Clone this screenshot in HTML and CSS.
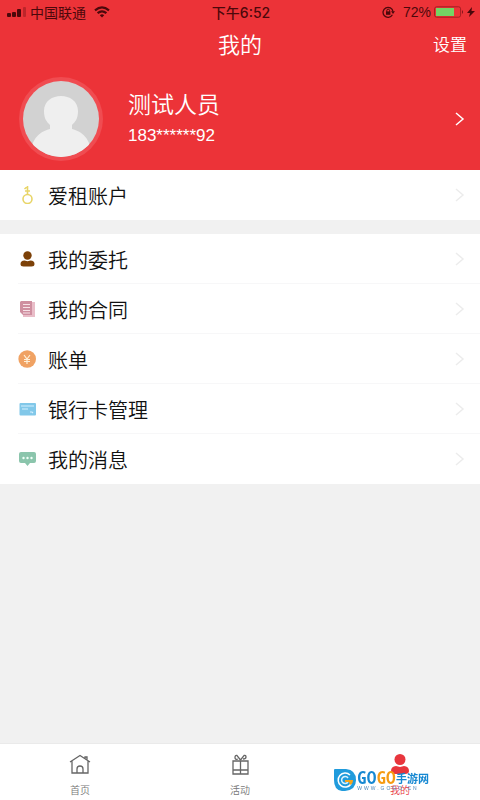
FILE: index.html
```html
<!DOCTYPE html>
<html lang="zh-CN">
<head>
<meta charset="utf-8">
<meta name="viewport" content="width=device-width, initial-scale=1">
<title>我的</title>
<link rel="stylesheet" href="styles.css">
</head>
<body>
<header class="hero">
  <div class="status">
    <div class="status-side">
      <svg width="20" height="12" viewBox="0 0 20 12" fill="currentColor" aria-hidden="true"><rect x="0" y="7" width="4" height="4" rx="1"/><rect x="5" y="6" width="4" height="5" rx="1"/><rect x="10" y="3" width="4" height="8" rx="1"/><rect x="16" y="1" width="3" height="10" rx="1" opacity=".3"/></svg>
      <span class="carrier">中国联通</span>
      <svg width="16" height="12" viewBox="0 0 16 12" fill="none" stroke="currentColor" stroke-width="2.2" aria-hidden="true"><path d="M1 4.4Q8-1.6 15 4.4M3.6 7.2Q8 3.4 12.4 7.2"/><path d="M5.8 9.2Q8 7.4 10.2 9.2L8 11.6Z" fill="currentColor" stroke="none"/></svg>
    </div>
    <time class="clock">下午6:52</time>
    <div class="status-side status-end">
      <svg width="13" height="12" viewBox="0 0 13 12" fill="none" stroke="currentColor" aria-hidden="true"><path d="M10.4 8.8A5 5 0 1 1 11 5.6" stroke-width="1.3"/><path d="M9 5.2h4L11 8z" fill="currentColor" stroke="none"/><rect x="4" y="5.4" width="4.400" height="3.400" fill="currentColor" stroke="none"/><path d="M4.800 5.800V4.600a1.400 1.400 0 0 1 2.800 0v1.200"/></svg>
      <span class="percent">72%</span>
      <svg width="30" height="12" viewBox="0 0 30 12" aria-hidden="true"><rect x=".6" y=".8" width="26" height="10.400" rx="2" fill="none" stroke="#a51d22"/><rect x="2" y="2" width="18" height="8" fill="#74d464"/><path d="M28 4q2 2 0 4z" fill="#7c1519"/></svg>
      <svg width="8" height="12" viewBox="0 0 8 12" fill="currentColor" aria-hidden="true"><path d="M5 1L0 7h3L2 11l6-6H4.500z"/></svg>
    </div>
  </div>
  <div class="titlebar">
    <h1>我的</h1>
    <a class="settings" href="#settings">设置</a>
  </div>
  <a class="profile" href="#profile">
    <svg class="avatar" viewBox="0 0 84 84" aria-hidden="true">
      <defs><clipPath id="face"><circle cx="42" cy="42" r="38"/></clipPath></defs>
      <circle cx="42" cy="42" r="42" fill="#f04c51"/>
      <circle cx="42" cy="42" r="38" fill="#d2d2d2"/>
      <g clip-path="url(#face)" fill="#efefef"><path d="M25 34C25 14 59 14 59 34C59 42 56 45 53 48V52C64 55 72 61 74 84H10C12 61 20 55 31 52V48C28 45 25 42 25 34Z"/></g>
    </svg>
    <span class="person"><strong>测试人员</strong><span class="phone">183******92</span></span>
    <svg class="arrow" viewBox="0 0 10 16" aria-hidden="true"><path d="M1 2l7 6-7 6"/></svg>
  </a>
</header>
<main>
  <nav class="group" aria-label="账户">
    <a class="row" href="#account">
      <svg class="icon" viewBox="0 0 18 18" fill="none" stroke="#e8d568" stroke-width="1.600" aria-hidden="true"><circle cx="9.500" cy="13" r="4.500"/><path d="M9.500 8.500V0M6.500 3L9.500 .500M7 5h5"/></svg>
      <span>爱租账户</span><svg class="arrow" viewBox="0 0 10 16" aria-hidden="true"><path d="M1 2l7 6-7 6"/></svg>
    </a>
  </nav>
  <nav class="group" aria-label="服务">
    <a class="row" href="#entrust">
      <svg class="icon" viewBox="0 0 18 18" fill="#7c4108" aria-hidden="true"><circle cx="9.500" cy="5.500" r="4.200"/><path d="M2.500 14q0-3.500 4-3.500l3 .800 3-.800q4 0 4 3.500 0 2.500-3 2.500h-8q-3 0-3-2.500Z"/></svg>
      <span>我的委托</span><svg class="arrow" viewBox="0 0 10 16" aria-hidden="true"><path d="M1 2l7 6-7 6"/></svg>
    </a>
    <a class="row" href="#contract">
      <svg class="icon" viewBox="0 0 18 18" aria-hidden="true"><path d="M5 2h12v15H5z" fill="#e9bdc8"/><path d="M3 1h11v14H5l-3-3V2z" fill="#cf8fa0"/><path d="M5 4.500h7M5 7.500h7M5 10.500h7M5 13h7" stroke="#f7e2e7"/></svg>
      <span>我的合同</span><svg class="arrow" viewBox="0 0 10 16" aria-hidden="true"><path d="M1 2l7 6-7 6"/></svg>
    </a>
    <a class="row" href="#bill">
      <svg class="icon" viewBox="0 0 18 18" fill="none" aria-hidden="true"><circle cx="9.200" cy="9" r="8.800" fill="#f0a263"/><path d="M6 5l3 4 3-4M9 9v5M6 9.500h6M6 11.500h6" stroke="#fff0d8" stroke-width="1.200"/></svg>
      <span>账单</span><svg class="arrow" viewBox="0 0 10 16" aria-hidden="true"><path d="M1 2l7 6-7 6"/></svg>
    </a>
    <a class="row" href="#cards">
      <svg class="icon" viewBox="0 0 18 18" fill="none" aria-hidden="true"><rect x="1.500" y="3" width="16.500" height="12.500" rx="1" fill="#82c8e9"/><path d="M3 6h13M4 9h6M12 12h2l1 1" stroke="#d4efff" stroke-width="1.200"/></svg>
      <span>银行卡管理</span><svg class="arrow" viewBox="0 0 10 16" aria-hidden="true"><path d="M1 2l7 6-7 6"/></svg>
    </a>
    <a class="row" href="#messages">
      <svg class="icon" viewBox="0 0 18 18" aria-hidden="true"><path d="M3 2h13q2 0 2 2v7q0 2-2 2h-4l-2.500 3L7 13H3q-2 0-2-2V4q0-2 2-2Z" fill="#8bc5ac"/><g fill="#f0fff8"><circle cx="5.500" cy="8" r="1.200"/><circle cx="9.500" cy="8" r="1.200"/><circle cx="13.500" cy="8" r="1.200"/></g></svg>
      <span>我的消息</span><svg class="arrow" viewBox="0 0 10 16" aria-hidden="true"><path d="M1 2l7 6-7 6"/></svg>
    </a>
  </nav>
</main>
<nav class="tabs" aria-label="主导航">
  <a href="#home">
    <svg viewBox="0 0 22 22" fill="none" stroke="#666" stroke-width="1.300" aria-hidden="true"><path d="M1 9L11 2.500 21 9M3 8v12h16V8M16 5.500V4h2v3M8 20v-4a3 3 0 0 1 6 0v4"/></svg>
    <span>首页</span>
  </a>
  <a href="#events">
    <svg viewBox="0 0 22 22" fill="none" stroke="#666" stroke-width="1.300" aria-hidden="true"><path d="M4 8h15v13H4zM11.500 8v13M4 17h15"/><path d="M11.500 7L8 2.500Q6 2 6 4.500T9 6M11.500 7L15 2.500Q17 2 17 4T14 6"/></svg>
    <span>活动</span>
  </a>
  <a class="current" href="#me" aria-current="page">
    <svg viewBox="0 0 22 22" fill="#e8363d" aria-hidden="true"><circle cx="11" cy="6.500" r="5.500"/><path d="M2 18q0-4.500 5-5l4 1 4-1q5 .500 5 5 0 3-4 3H6q-4 0-4-3Z"/></svg>
    <span>我的</span>
  </a>
</nav>
<div class="watermark">
  <svg width="22" height="22" viewBox="0 0 22 22" fill="none" aria-hidden="true"><path d="M1 0h11q10 1 10 11T11 22 0 11V1q0-1 1-1Z" fill="#209bdc"/><path d="M16 6A7 7 0 1 0 17 15" stroke="#fff" stroke-width="1.500"/><path d="M14 9a3.500 3.500 0 1 0 0 4" stroke="#d9f2ff" stroke-width="1.500"/><path d="M11 11h8q0 4-3 5l-1-3h-4z" fill="#f7a51c"/></svg>
  <div class="brand">
    <div class="brand-name"><b>GO</b><b class="orange">GO</b><span>手游网</span></div>
    <div class="brand-url">WWW.GOGO.CN</div>
  </div>
</div>
</body>
</html>
```
FILE: styles.css
```css
* { box-sizing: border-box; }
body {
  margin: 0;
  min-height: 100vh;
  display: flex;
  flex-direction: column;
  background: #f1f1f1;
  color: #111;
  font-family: "Liberation Sans", "Noto Sans CJK SC", sans-serif;
  font-weight: 350;
}
a { color: inherit; text-decoration: none; }
svg { flex: none; display: block; }
.hero { background: #ec3338; color: #fff; }
.status {
  display: grid;
  grid-template-columns: 1fr auto 1fr;
  align-items: center;
  height: 24px;
  padding: 0 5px 0 7px;
  color: #4c080b;
  font-size: 14px;
  font-weight: 400;
}
.status-side { display: flex; align-items: center; }
.carrier { margin: 0 8px 0 3px; }
.clock { font-family: Inter, "Noto Sans CJK SC", sans-serif; font-weight: 500; }
.status-end { justify-content: flex-end; gap: 3px; }
.percent { margin-left: 5px; }
.titlebar {
  display: grid;
  grid-template-columns: 1fr auto 1fr;
  align-items: center;
  height: 44px;
  padding: 0 13px;
}
h1 { grid-column: 2; margin: 0; font-size: 22px; font-weight: 350; line-height: 32px; }
.settings { justify-self: end; font-size: 17px; line-height: 24px; }
.profile { display: flex; align-items: center; height: 102px; padding: 0 15px 0 19px; }
.avatar { width: 84px; height: 84px; }
.person { flex: 1; display: flex; flex-direction: column; margin-left: 25px; }
.person strong { font-size: 23px; font-weight: 350; line-height: 34px; }
.phone { font-size: 17px; line-height: 28px; }
.arrow { width: 10px; height: 16px; fill: none; stroke: #fff; stroke-width: 1.5; }
.group { background: #fff; margin-bottom: 14px; }
.row {
  display: flex;
  align-items: center;
  height: 50px;
  padding: 0 15px 0 18px;
  font-size: 20px;
  background: linear-gradient(#f7f7f8, #f7f7f8) 18px 100% / 100% 1px no-repeat;
}
.row:last-child { background: none; }
.row span { flex: 1; margin-left: 12px; }
.row .arrow { stroke: #ececec; }
.icon { width: 18px; height: 18px; }
.tabs {
  display: grid;
  grid-template-columns: repeat(3, 1fr);
  height: 57px;
  margin-top: auto;
  background: #fff;
  border-top: 1px solid #eaeaea;
}
.tabs a {
  display: flex;
  flex-direction: column;
  align-items: center;
  padding-top: 9px;
  gap: 8px;
  color: #777;
  font-size: 10px;
  line-height: 16px;
}
.tabs svg { width: 22px; height: 22px; }
.tabs .current { color: #e8363d; }
.watermark {
  position: fixed;
  right: 51px;
  bottom: 9px;
  display: flex;
  align-items: flex-start;
  gap: 1px;
  font-weight: 400;
  pointer-events: none;
}
.brand-name { display: flex; align-items: center; height: 17px; color: #1688d2; }
.brand-name b { font: 700 17px/17px "Open Sans Condensed", "Liberation Sans Narrow", "DejaVu Sans Condensed", sans-serif; }
.brand-name .orange { color: #f69b12; }
.brand-name span { font-size: 11px; font-weight: 700; }
.brand-url { color: #4d86b7; font-size: 5px; line-height: 5px; letter-spacing: 2px; }
```
